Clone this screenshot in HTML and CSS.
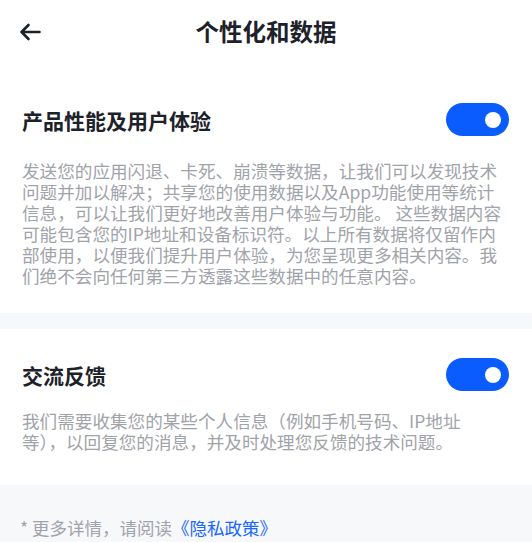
FILE: index.html
```html
<!DOCTYPE html>
<html lang="zh-CN">
    <head>
        <meta charset="UTF-8" />
        <meta name="viewport" content="width=device-width, initial-scale=1.0" />
        <title>个性化和数据</title>
        <link rel="stylesheet" href="styles.css">
    </head>
    <body>
        <div class="page">
            <div class="header">
                <span class="back">
                    <svg width="22" height="18" viewBox="0 0 22 18">
                        <path d="M20.5 9H2.5M9.5 2L2.5 9L9.5 16" fill="none" stroke="#1d2129" stroke-width="2.6" stroke-linecap="round" stroke-linejoin="round" />
                    </svg>
                </span>
                <div class="title">个性化和数据</div>
            </div>

            <div class="section section-1">
                <div class="row">
                    <div class="row-title">产品性能及用户体验</div>
                    <div class="switch on"><span class="knob"></span></div>
                </div>
                <p class="desc">发送您的应用闪退、卡死、崩溃等数据，让我们可以发现技术问题并加以解决；共享您的使用数据以及App功能使用等统计信息，可以让我们更好地改善用户体验与功能。 这些数据内容可能包含您的IP地址和设备标识符。以上所有数据将仅留作内部使用，以便我们提升用户体验，为您呈现更多相关内容。我们绝不会向任何第三方透露这些数据中的任意内容。</p>
            </div>

            <div class="gap"></div>

            <div class="section section-2">
                <div class="row">
                    <div class="row-title">交流反馈</div>
                    <div class="switch on"><span class="knob"></span></div>
                </div>
                <p class="desc">我们需要收集您的某些个人信息（例如手机号码、IP地址等），以回复您的消息，并及时处理您反馈的技术问题。</p>
            </div>

            <div class="footer">
                * 更多详情，请阅读<a class="link" href="#">《隐私政策》</a>
            </div>
        </div>
    </body>
</html>
```

FILE: styles.css
```css
* {
    margin: 0;
    padding: 0;
    box-sizing: border-box;
}

body {
    width: 100%;
    height: 100%;
    background-color: #fff;
    font-family: "Noto Sans CJK SC", "Noto Sans", sans-serif;
    color: #1d2129;
}

.page {
    width: 532px;
    height: 542px;
    display: flex;
    flex-direction: column;
    overflow: hidden;
}

/* 顶部标题栏 */
.header {
    position: relative;
    height: 62px;
    display: flex;
    align-items: center;
    justify-content: center;
}

.back {
    position: absolute;
    left: 19px;
    top: 23px;
    width: 22px;
    height: 18px;
    display: flex;
}

.title {
    font-size: 23.5px;
    font-weight: bold;
    line-height: 30px;
}

.section {
    padding: 0 23px 0 22px;
}

.section-1 {
    padding-top: 41px;
    padding-bottom: 27px;
}

.section-2 {
    padding-top: 29px;
    padding-bottom: 33px;
}

.row {
    display: flex;
    align-items: center;
    justify-content: space-between;
    height: 33px;
}

.row-title {
    font-size: 21px;
    font-weight: bold;
    line-height: 30px;
}

/* 开关 */
.switch {
    position: relative;
    width: 63px;
    height: 33px;
    border-radius: 17px;
    background-color: #c9cdd4;
}

.switch.on {
    background-color: #0a5cff;
}

.knob {
    position: absolute;
    top: 8.5px;
    right: 8px;
    width: 16px;
    height: 16px;
    border-radius: 50%;
    background-color: #fff;
}

.desc {
    font-size: 17.6px;
    line-height: 21px;
    color: #9fa3aa;
}

.section-1 .desc {
    margin-top: 24px;
}

.section-2 .desc {
    margin-top: 19px;
    max-width: 470px;
}

.gap {
    height: 16px;
    background-color: #f7f8fa;
}

.footer {
    flex: 1;
    background-color: #f7f8fa;
    padding: 31px 20px 0;
    font-size: 17.5px;
    line-height: 24px;
    color: #9fa3aa;
}

.link {
    color: #1a66ff;
    text-decoration: none;
}
```
